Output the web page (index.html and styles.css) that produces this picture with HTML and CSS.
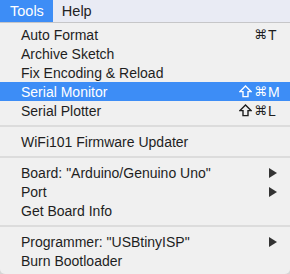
FILE: index.html
```html
<!DOCTYPE html>
<html lang="en">
<head>
  <meta charset="UTF-8">
  <title>Tools menu</title>
  <link rel="stylesheet" href="styles.css">
</head>
<body>
  <div class="menubar">
    <div class="bar-item active">Tools</div>
    <div class="bar-item">Help</div>
  </div>
  <div class="menu">
    <div class="row"><span class="label">Auto Format</span><span class="mods">⌘</span><span class="key">T</span></div>
    <div class="row"><span class="label">Archive Sketch</span></div>
    <div class="row"><span class="label">Fix Encoding &amp; Reload</span></div>
    <div class="row selected"><span class="label">Serial Monitor</span><svg class="shift" width="13" height="13" viewBox="0 0 13 13"><path d="M6.5 1 L12 6.6 H9 V11.6 H4 V6.6 H1 Z"/></svg><span class="mods">⌘</span><span class="key">M</span></div>
    <div class="row"><span class="label">Serial Plotter</span><svg class="shift" width="13" height="13" viewBox="0 0 13 13"><path d="M6.5 1 L12 6.6 H9 V11.6 H4 V6.6 H1 Z"/></svg><span class="mods">⌘</span><span class="key">L</span></div>
    <div class="sep"></div>
    <div class="row"><span class="label">WiFi101 Firmware Updater</span></div>
    <div class="sep"></div>
    <div class="row"><span class="label">Board: "Arduino/Genuino Uno"</span><span class="key arrow"><svg width="8" height="10" viewBox="0 0 8 10"><path d="M0 0 L8 5 L0 10 Z"/></svg></span></div>
    <div class="row"><span class="label">Port</span><span class="key arrow"><svg width="8" height="10" viewBox="0 0 8 10"><path d="M0 0 L8 5 L0 10 Z"/></svg></span></div>
    <div class="row"><span class="label">Get Board Info</span></div>
    <div class="sep"></div>
    <div class="row"><span class="label">Programmer: "USBtinyISP"</span><span class="key arrow"><svg width="8" height="10" viewBox="0 0 8 10"><path d="M0 0 L8 5 L0 10 Z"/></svg></span></div>
    <div class="row"><span class="label">Burn Bootloader</span></div>
  </div>
</body>
</html>
```

FILE: styles.css
```css
html, body {
  margin: 0;
  padding: 0;
  width: 290px;
  height: 274px;
  background-color: #d6d6d6;
  font-family: 'Liberation Sans', Arial, 'DejaVu Sans', sans-serif;
  font-size: 14px;
  color: #1e1e1e;
  overflow: hidden;
}
.menubar {
  display: flex;
  height: 22px;
  background-color: #e9ebf4;
  border-bottom: 1px solid #c6c6c8;
}
.bar-item {
  padding: 0 9px;
  line-height: 22px;
  font-size: 14.5px;
  color: #222;
}
.bar-item.active {
  padding-left: 10px;
  background-color: #3d8df6;
  color: #fff;
}
.menu {
  background-color: #f0f0f0;
  padding: 2px 0 4px;
  border-radius: 0 0 5px 5px;
}
.row {
  display: flex;
  align-items: center;
  height: 19px;
  padding: 0 10px 0 21px;
}
.row.selected {
  background-color: #3d8df6;
  color: #fff;
}
.label {
  flex: 1;
  white-space: nowrap;
}
.shift {
  margin-right: 2px;
  fill: none;
  stroke: currentColor;
  stroke-width: 1.4;
  stroke-linejoin: miter;
}
.mods {
  font-family: 'DejaVu Sans', sans-serif;
  font-size: 13px;
  text-align: right;
}
.key {
  width: 12px;
  margin-left: 1px;
  text-align: left;
}
.arrow {
  display: flex;
  align-items: center;
  padding-left: 1px;
  width: 11px;
  margin-left: 0;
}
.arrow svg {
  fill: #333;
}
.sep {
  height: 12px;
  display: flex;
  align-items: center;
}
.sep::before {
  content: "";
  flex: 1;
  height: 2px;
  background-color: #dcdcdc;
}
```
